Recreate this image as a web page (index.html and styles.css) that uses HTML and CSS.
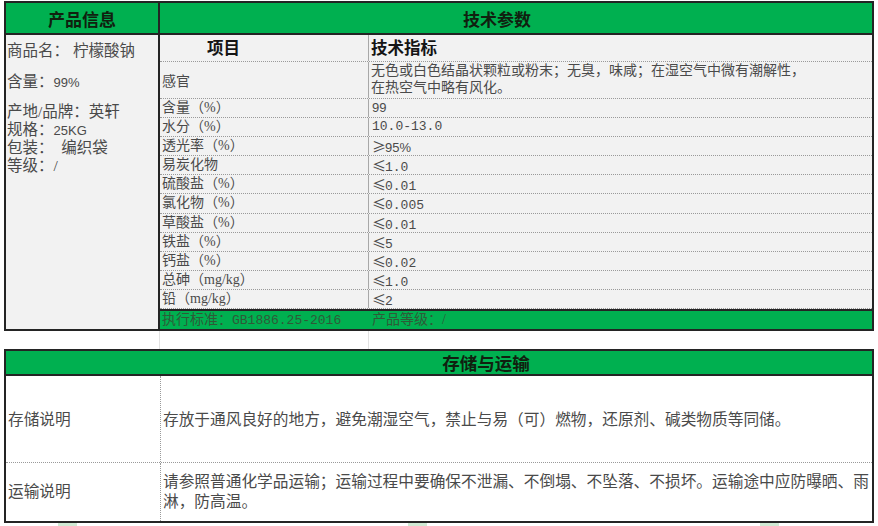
FILE: index.html
```html
<!DOCTYPE html>
<html lang="zh-CN">
<head>
<meta charset="utf-8">
<title>产品信息</title>
<link rel="stylesheet" href="styles.css">
</head>
<body>
<div class="sheet">
  <div class="top">
    <div class="info">
      <div class="hdr info-hdr">产品信息</div>
      <div class="info-body">
        <div class="il l1">商品名：&nbsp;柠檬酸钠</div>
        <div class="il l2">含量：<span class="sans">99%</span></div>
        <div class="il l3">产地/品牌：英轩</div>
        <div class="il">规格：<span class="sans">25KG</span></div>
        <div class="il">包装：&nbsp;&nbsp;编织袋</div>
        <div class="il">等级：/</div>
      </div>
    </div>
    <div class="tech">
      <div class="hdr tech-hdr">技术参数</div>
      <div class="trow sub"><div class="c1 sub1">项目</div><div class="c2">技术指标</div></div>
      <div class="trow tall"><div class="c1 mid">感官</div><div class="c2 wrap">无色或白色结晶状颗粒或粉末；无臭，味咸；在湿空气中微有潮解性，<br>在热空气中略有风化。</div></div>
      <div class="trow"><div class="c1">含量（%）</div><div class="c2 num"><span class="sans">99</span></div></div>
      <div class="trow"><div class="c1">水分（%）</div><div class="c2 num">10.0-13.0</div></div>
      <div class="trow"><div class="c1">透光率（%）</div><div class="c2 num"><span class="cmp">≥</span><span class="sans">95%</span></div></div>
      <div class="trow"><div class="c1">易炭化物</div><div class="c2 num"><span class="cmp">≤</span>1.0</div></div>
      <div class="trow"><div class="c1">硫酸盐（%）</div><div class="c2 num"><span class="cmp">≤</span>0.01</div></div>
      <div class="trow"><div class="c1">氯化物（%）</div><div class="c2 num"><span class="cmp">≤</span>0.005</div></div>
      <div class="trow"><div class="c1">草酸盐（%）</div><div class="c2 num"><span class="cmp">≤</span>0.01</div></div>
      <div class="trow"><div class="c1">铁盐（%）</div><div class="c2 num"><span class="cmp">≤</span>5</div></div>
      <div class="trow"><div class="c1">钙盐（%）</div><div class="c2 num"><span class="cmp">≤</span>0.02</div></div>
      <div class="trow"><div class="c1">总砷（mg/kg）</div><div class="c2 num"><span class="cmp">≤</span>1.0</div></div>
      <div class="trow"><div class="c1">铅（mg/kg）</div><div class="c2 num"><span class="cmp">≤</span>2</div></div>
      <div class="tfoot"><div class="f1">执行标准：<span class="lat">GB1886.25-2016</span></div><div class="f2">产品等级：/</div></div>
    </div>
  </div>
  <div class="gap"><div class="g1"></div><div class="g2"></div></div>
  <div class="bottom">
    <div class="hdr st-hdr">存储与运输</div>
    <div class="brow r1"><div class="b1">存储说明</div><div class="b2">存放于通风良好的地方，避免潮湿空气，禁止与易（可）燃物，还原剂、碱类物质等同储。</div></div>
    <div class="brow r2"><div class="b1">运输说明</div><div class="b2">请参照普通化学品运输；运输过程中要确保不泄漏、不倒塌、不坠落、不损坏。运输途中应防曝晒、雨<br>淋，防高温。</div></div>
  </div>
  <div class="marks"><span class="mk m1"></span><span class="mk m2"></span><span class="mk m3"></span></div>
</div>
</body>
</html>
```

FILE: styles.css
```css
* { box-sizing: border-box; }
html, body { margin: 0; padding: 0; background: #ffffff; }
body {
  font-family: "Liberation Serif", "Noto Sans CJK SC", sans-serif;
  color: #4a4a4a;
}
.sheet { padding: 1px 0 0 4px; width: 878px; }

.lat { font-family: "Liberation Mono", monospace; font-size: 13px; }
.sans { font-family: "Liberation Sans", sans-serif; font-size: 13px; }

.top {
  display: flex;
  width: 870px;
  border: 2px solid #242424;
  background: #f2f2f2;
}
.hdr {
  background: #00b050;
  border-bottom: 2px solid #242424;
  color: #10200f;
  font-family: "Noto Sans CJK SC", sans-serif;
  font-weight: 700;
  display: flex;
  align-items: center;
}
.info {
  width: 154px;
  border-right: 2px solid #242424;
  display: flex;
  flex-direction: column;
}
.info-hdr { height: 32px; justify-content: center; font-size: 17px; }
.info-body { flex: 1; padding-left: 1px; font-size: 15.5px; }
.il { line-height: 18px; height: 18px; white-space: nowrap; }
.l1 { margin-top: 7px; }
.l2 { margin-top: 13px; }
.l3 { margin-top: 12px; }

.tech { flex: 1; display: flex; flex-direction: column; }
.tech-hdr { height: 32px; justify-content: center; padding-right: 38px; font-size: 17px; }
.trow {
  display: flex;
  height: 19.1px;
  border-bottom: 1px dotted #9a9a9a;
  font-size: 14px;
  line-height: 18px;
}
.c1 {
  width: 209px;
  border-right: 1px solid #a8a8a8;
  padding-left: 2px;
  white-space: nowrap;
}
.c2 { flex: 1; padding-left: 2px; white-space: nowrap; }
.num { font-family: "Liberation Mono", monospace; font-size: 13px; padding-left: 3px; }
.cmp { font-family: "Noto Sans CJK SC", sans-serif; font-size: 14px; display: inline-block; width: 13px; }
.sub { height: 27px; align-items: stretch; }
.sub .c1, .sub .c2 {
  color: #151515;
  font-family: "Noto Sans CJK SC", sans-serif;
  font-weight: 700;
  font-size: 16.5px;
  line-height: 25px;
}
.sub1 { padding-left: 47px; }
.tall { height: 37px; }
.tall .mid { display: flex; align-items: center; padding-top: 4px; }
.tall .wrap { line-height: 16.5px; padding-top: 1px; }

.tfoot {
  display: flex;
  height: 20px;
  background: #00b050;
  border-top: 2px solid #242424;
  font-size: 14px;
  line-height: 18px;
  color: #2f5a38;
}
.f1 { width: 209px; padding-left: 2px; white-space: nowrap; }
.f2 { flex: 1; padding-left: 3px; }

.gap { display: flex; height: 18px; width: 870px; }
.g1 { width: 156px; border-right: 1px solid #e2e2e2; }
.g2 { width: 209px; border-right: 1px solid #e2e2e2; }

.bottom {
  width: 870px;
  border: 2px solid #242424;
  background: #ffffff;
}
.st-hdr { height: 25px; justify-content: center; padding-left: 94px; font-size: 17.5px; }
.brow { display: flex; align-items: stretch; font-size: 15.7px; line-height: 20px; }
.r1 { height: 87px; border-bottom: 1px dotted #9a9a9a; }
.r2 { height: 58px; }
.b1 {
  width: 155px;
  border-right: 1px dotted #9a9a9a;
  padding-left: 2px;
  display: flex;
  align-items: center;
}
.b2 { flex: 1; padding-left: 2px; display: flex; align-items: center; white-space: nowrap; }
.r1 .b1, .r1 .b2 { padding-top: 2px; }

.marks { display: flex; height: 3px; width: 870px; }
.mk { display: block; height: 3px; width: 19px; background: #cfe9d3; }
.m1 { margin-left: 54px; }
.m2 { margin-left: 331px; }
.m3 { margin-left: 333px; }
```
